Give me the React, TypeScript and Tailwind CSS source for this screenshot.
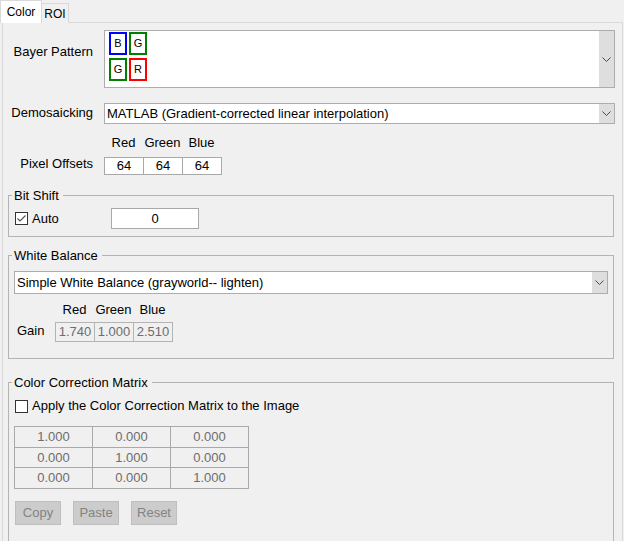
import React from 'react';

const cellBox = 'flex items-center justify-center border border-[#a9a9a9]';

function Chevron() {
  return (
    <svg width="9" height="5" viewBox="0 0 9 5">
      <polyline points="0.5,0.5 4.5,4.5 8.5,0.5" fill="none" stroke="#4a4a4a" strokeWidth="1" />
    </svg>
  );
}

function CheckBox({ checked }: { checked?: boolean }) {
  return (
    <svg width="13" height="13" viewBox="0 0 13 13" className="shrink-0">
      <rect x="0.5" y="0.5" width="12" height="12" fill="#ffffff" stroke="#333333" />
      {checked && (
        <polyline points="2.5,6.5 5,9 10.5,3.5" fill="none" stroke="#555555" strokeWidth="1.2" />
      )}
    </svg>
  );
}

function Combo({ text, className }: { text: string; className: string }) {
  return (
    <div className={`flex border border-[#adadad] bg-white ${className}`}>
      <div className="flex-1 flex items-center pl-[2px] text-[13px] text-black">{text}</div>
      <div className="w-[15px] bg-[#dedede] flex items-center justify-center">
        <Chevron />
      </div>
    </div>
  );
}

function BayerCell({ letter, color }: { letter: string; color: string }) {
  return (
    <div className={`w-[18px] h-[23px] border-2 ${color} flex items-center justify-center text-[11px] text-black`}>
      {letter}
    </div>
  );
}

function Group({ title, className, children }: { title: string; className: string; children: React.ReactNode }) {
  return (
    <fieldset className={`ml-[5px] w-[606px] border border-[#b4b4b4] px-[5px] ${className}`}>
      <legend className="-ml-[2px] pl-[2px] pr-[4px] text-[13px] leading-[15px] text-black">{title}</legend>
      {children}
    </fieldset>
  );
}

const matrix = [
  ['1.000', '0.000', '0.000'],
  ['0.000', '1.000', '0.000'],
  ['0.000', '0.000', '1.000'],
];

export default function App() {
  return (
    <div className="w-[624px] h-[541px] overflow-hidden bg-[#f0f0f0] font-['Liberation_Sans',Arial,sans-serif] text-black">
      <div className="flex items-end h-[23px]">
        <div className="w-[42px] h-[23px] bg-white border border-b-0 border-[#d9d9d9] flex items-center justify-center text-[12px] relative z-10">
          Color
        </div>
        <div className="w-[27px] h-[20px] bg-[#f0f0f0] border border-l-0 border-b-0 border-[#d9d9d9] flex items-center justify-center text-[12px]">
          ROI
        </div>
      </div>
      <div className="-mt-px ml-[2px] w-[621px] h-[519px] border border-b-0 border-[#d9d9d9]">
        {/* Bayer pattern */}
        <div className="flex mt-[7px]">
          <div className="w-[101px] pr-[11px] text-right text-[13px] leading-[15px] mt-[14px]">Bayer Pattern</div>
          <div className="w-[511px] h-[58px] flex border border-[#adadad] bg-white">
            <div className="flex-1 pl-[4px] pt-px flex flex-col gap-[3px]">
              <div className="flex gap-[2px]">
                <BayerCell letter="B" color="border-[#0000ff]" />
                <BayerCell letter="G" color="border-[#008000]" />
              </div>
              <div className="flex gap-[2px]">
                <BayerCell letter="G" color="border-[#008000]" />
                <BayerCell letter="R" color="border-[#ff0000]" />
              </div>
            </div>
            <div className="w-[15px] bg-[#dedede] flex items-center justify-center">
              <Chevron />
            </div>
          </div>
        </div>

        {/* Demosaicking */}
        <div className="flex mt-[15px] items-center">
          <div className="w-[101px] pr-[11px] text-right text-[13px] -mt-[2px]">Demosaicking</div>
          <Combo text="MATLAB (Gradient-corrected linear interpolation)" className="w-[511px] h-[21px]" />
        </div>

        {/* Pixel offsets */}
        <div className="flex mt-[11px] pl-[101px] text-[13px] leading-[15px]">
          <div className="w-[39px] text-center">Red</div>
          <div className="w-[39px] text-center">Green</div>
          <div className="w-[39px] text-center">Blue</div>
        </div>
        <div className="flex mt-[7px]">
          <div className="w-[101px] pr-[11px] text-right text-[13px] leading-[15px] -mt-px">Pixel Offsets</div>
          <div className="flex">
            <div className={`${cellBox} w-[40px] h-[18px] bg-white text-[13px]`}>64</div>
            <div className={`${cellBox} w-[40px] h-[18px] -ml-px bg-white text-[13px]`}>64</div>
            <div className={`${cellBox} w-[40px] h-[18px] -ml-px bg-white text-[13px]`}>64</div>
          </div>
        </div>

        {/* Bit shift */}
        <Group title="Bit Shift" className="mt-[13px] pb-[7px]">
          <div className="flex items-center mt-[5px] h-[21px]">
            <div className="ml-px flex items-center gap-[4px] w-[96px] text-[13px]">
              <CheckBox checked />
              <span>Auto</span>
            </div>
            <div className="w-[88px] h-[21px] border border-[#a9a9a9] bg-white flex items-center justify-center text-[13px]">
              0
            </div>
          </div>
        </Group>

        {/* White balance */}
        <Group title="White Balance" className="mt-[11px] pb-[16px]">
          <Combo text="Simple White Balance (grayworld-- lighten)" className="mt-[8px] w-[594px] h-[23px]" />
          <div className="flex mt-[8px] pl-[41px] text-[13px] leading-[15px]">
            <div className="w-[39px] text-center">Red</div>
            <div className="w-[39px] text-center">Green</div>
            <div className="w-[39px] text-center">Blue</div>
          </div>
          <div className="flex mt-[5px] items-center">
            <div className="w-[41px] pl-[3px] text-[13px] -mt-[3px]">Gain</div>
            {['1.740', '1.000', '2.510'].map((v, i) => (
              <div
                key={v}
                className={`${cellBox} w-[40px] h-[20px] text-[13px] text-[#6d6d6d] border-[#b4b4b4] ${i > 0 ? '-ml-px' : ''}`}
              >
                {v}
              </div>
            ))}
          </div>
        </Group>

        {/* Color correction matrix */}
        <Group title="Color Correction Matrix" className="mt-[16px] h-[200px]">
          <div className="flex items-center gap-[4px] mt-[8px] ml-px h-[16px] text-[13px]">
            <CheckBox />
            <span>Apply the Color Correction Matrix to the Image</span>
          </div>
          <div className="mt-[12px] flex flex-col">
            {matrix.map((row, r) => (
              <div key={r} className={`flex ${r > 0 ? '-mt-px' : ''}`}>
                {row.map((v, c) => (
                  <div
                    key={c}
                    className={`${cellBox} w-[79px] ${r === 1 ? 'h-[21px]' : 'h-[22px]'} text-[13px] text-[#6d6d6d] ${c > 0 ? '-ml-px' : ''}`}
                  >
                    {v}
                  </div>
                ))}
              </div>
            ))}
          </div>
          <div className="flex gap-[12px] mt-[12px] ml-px">
            {['Copy', 'Paste', 'Reset'].map((b) => (
              <div
                key={b}
                className="w-[46px] h-[24px] bg-[#cccccc] border border-[#bfbfbf] flex items-center justify-center text-[13px] text-[#838383]"
              >
                {b}
              </div>
            ))}
          </div>
        </Group>
      </div>
    </div>
  );
}
